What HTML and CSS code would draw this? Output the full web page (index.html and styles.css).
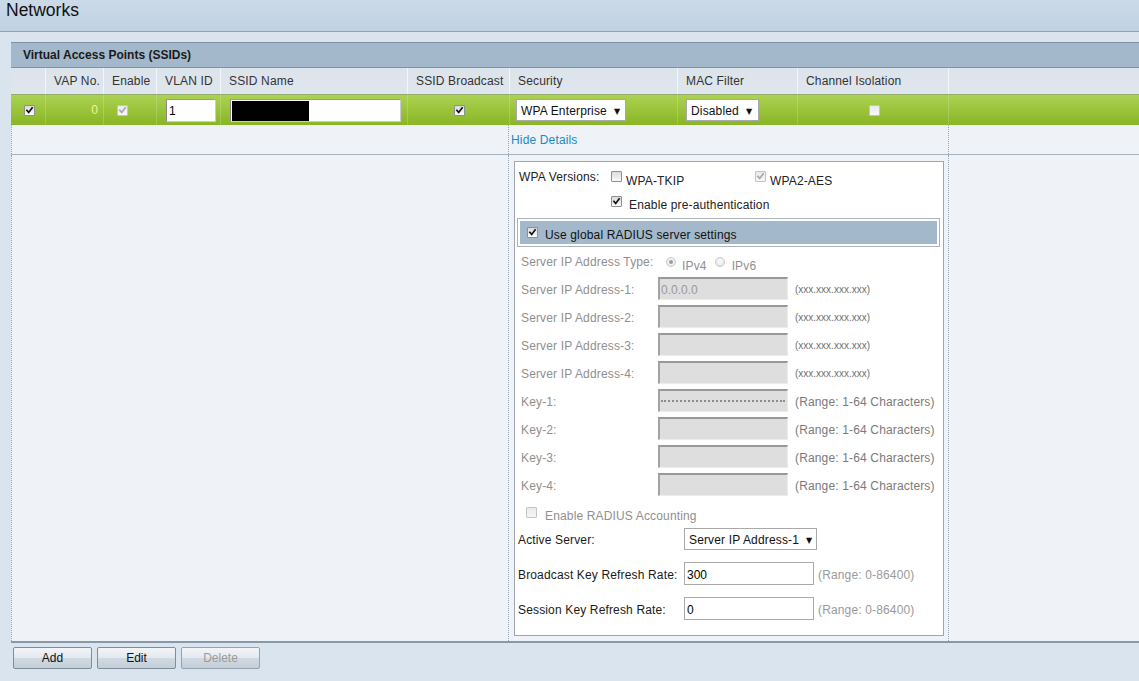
FILE: index.html
```html
<!DOCTYPE html>
<html>
<head>
<meta charset="utf-8">
<title>Networks</title>
<link rel="stylesheet" href="styles.css">
</head>
<body>
<div class="topbar"><h1 class="title">Networks</h1></div>
<div class="main">
  <div class="vap">
    <div class="cap">Virtual Access Points (SSIDs)</div>
    <div class="row hdr">
      <div class="c"></div>
      <div class="c">VAP No.</div>
      <div class="c">Enable</div>
      <div class="c">VLAN ID</div>
      <div class="c">SSID Name</div>
      <div class="c">SSID Broadcast</div>
      <div class="c">Security</div>
      <div class="c">MAC Filter</div>
      <div class="c">Channel Isolation</div>
      <div class="c"></div>
    </div>
    <div class="row sel">
      <div class="c p14"><span class="cb on"><svg viewBox="0 0 11 11"><path d="M2.3 5.4l2.2 2.4 4.2-5.6"/></svg></span></div>
      <div class="c num">0</div>
      <div class="c p14"><span class="cb on dis"><svg viewBox="0 0 11 11"><path d="M2.3 5.4l2.2 2.4 4.2-5.6"/></svg></span></div>
      <div class="c p10"><input class="wtxt vlan" value="1"></div>
      <div class="c p10"><div class="wtxt ssid"><span class="mask"></span></div></div>
      <div class="c p47"><span class="cb on"><svg viewBox="0 0 11 11"><path d="M2.3 5.4l2.2 2.4 4.2-5.6"/></svg></span></div>
      <div class="c p7"><div class="dd dd-sec"><span>WPA Enterprise</span><span class="arr">▼</span></div></div>
      <div class="c p9"><div class="dd dd-mac"><span>Disabled</span><span class="arr">▼</span></div></div>
      <div class="c p72"><span class="cb dis"></span></div>
      <div class="c"></div>
    </div>
    <div class="row2 link">
      <div class="d1"></div>
      <div class="d2"><a class="hide">Hide Details</a></div>
      <div class="d3"></div>
    </div>
    <div class="row2 det">
      <div class="d1"></div>
      <div class="d2">
        <div class="box">
          <div class="wpa">
            <span class="lab-wpa">WPA Versions:</span>
            <div class="grp">
              <span class="cb"></span><span class="cbt">WPA-TKIP</span>
            </div>
            <div class="grp">
              <span class="cb on dis"><svg viewBox="0 0 11 11"><path d="M2.3 5.4l2.2 2.4 4.2-5.6"/></svg></span><span class="cbt">WPA2-AES</span>
            </div>
          </div>
          <div class="pre">
            <span class="cb on"><svg viewBox="0 0 11 11"><path d="M2.3 5.4l2.2 2.4 4.2-5.6"/></svg></span><span class="pre-t">Enable pre-authentication</span>
          </div>
          <div class="radius">
            <div class="radius-in">
              <span class="cb on"><svg viewBox="0 0 11 11"><path d="M2.3 5.4l2.2 2.4 4.2-5.6"/></svg></span><span class="radius-t">Use global RADIUS server settings</span>
            </div>
          </div>
          <div class="iptype">
            <span class="lab-type">Server IP Address Type:</span>
            <span class="rd on"></span><span class="rdt">IPv4</span>
            <span class="rd rd2"></span><span class="rdt">IPv6</span>
          </div>
          <div class="field"><span class="flab">Server IP Address-1:</span><input class="gfld" value="0.0.0.0" disabled><span class="ihint">(xxx.xxx.xxx.xxx)</span></div>
          <div class="field"><span class="flab">Server IP Address-2:</span><input class="gfld" value="" disabled><span class="ihint">(xxx.xxx.xxx.xxx)</span></div>
          <div class="field"><span class="flab">Server IP Address-3:</span><input class="gfld" value="" disabled><span class="ihint">(xxx.xxx.xxx.xxx)</span></div>
          <div class="field"><span class="flab">Server IP Address-4:</span><input class="gfld" value="" disabled><span class="ihint">(xxx.xxx.xxx.xxx)</span></div>
          <div class="field"><span class="flab">Key-1:</span><div class="gfld gkey"><span class="dots"></span></div><span class="rhint">(Range: 1-64 Characters)</span></div>
          <div class="field"><span class="flab">Key-2:</span><input class="gfld" value="" disabled><span class="rhint">(Range: 1-64 Characters)</span></div>
          <div class="field"><span class="flab">Key-3:</span><input class="gfld" value="" disabled><span class="rhint">(Range: 1-64 Characters)</span></div>
          <div class="field"><span class="flab">Key-4:</span><input class="gfld" value="" disabled><span class="rhint">(Range: 1-64 Characters)</span></div>
          <div class="acct">
            <span class="cb dis"></span><span class="acct-t">Enable RADIUS Accounting</span>
          </div>
          <div class="frow active">
            <span class="blab">Active Server:</span>
            <div class="dd dd-act"><span>Server IP Address-1</span><span class="arr">▼</span></div>
          </div>
          <div class="frow gap12">
            <span class="blab">Broadcast Key Refresh Rate:</span>
            <input class="wfld" value="300"><span class="bhint">(Range: 0-86400)</span>
          </div>
          <div class="frow gap12">
            <span class="blab">Session Key Refresh Rate:</span>
            <input class="wfld" value="0"><span class="bhint">(Range: 0-86400)</span>
          </div>
        </div>
      </div>
      <div class="d3"></div>
    </div>
  </div>
  <div class="btns">
    <button class="btn">Add</button>
    <button class="btn">Edit</button>
    <button class="btn off">Delete</button>
  </div>
</div>
</body>
</html>
```

FILE: styles.css
```css
* { box-sizing: border-box; }
html, body { margin: 0; padding: 0; }
body {
  font-family: "Liberation Sans", Arial, sans-serif;
  font-size: 12px;
  line-height: 14px;
  letter-spacing: 0.15px;
  color: #222;
  background: #d9e4ef;
  width: 1139px;
  height: 681px;
  overflow: hidden;
}
.topbar {
  height: 32px;
  background: linear-gradient(#cbdae9, #c0d2e3);
  border-bottom: 1px solid #8fa3b6;
}
.title {
  margin: 0;
  padding: 0 0 0 6px;
  font-size: 17.5px;
  line-height: 20px;
  font-weight: normal;
  letter-spacing: 0;
  color: #111;
}
.main { padding: 10px 0 0 11px; }
.vap {
  width: 1128px;
  border-top: 1px solid #7d92a5;
  border-bottom: 2px solid #8798a8;
}
.cap {
  height: 25px;
  background: #a3b8ca;
  border-bottom: 1px solid #7d92a5;
  padding: 5px 0 0 12px;
  font-weight: bold;
  letter-spacing: 0;
  color: #1a1a1a;
}
.row {
  display: grid;
  grid-template-columns: 34px 58px 53px 64px 187px 102px 168px 120px 151px 1fr;
}
.c {
  display: flex;
  align-items: center;
  white-space: nowrap;
  overflow: hidden;
}
.hdr { height: 26px; background: linear-gradient(#dbe3eb, #e0e6ee); }
.hdr .c { padding-left: 8px; color: #333; }
.hdr .c + .c { border-left: 1px solid #f3f6f9; }
.sel {
  height: 31px;
  border-top: 1px solid #95ad6a;
  background: linear-gradient(#abd253, #8ab524);
}
.sel .c + .c { border-left: 1px solid rgba(255,255,255,0.18); }
.p14 { padding-left: 13px; }
.p10 { padding-left: 9px; }
.p47 { padding-left: 46px; }
.p7 { padding-left: 6px; }
.p9 { padding-left: 8px; }
.p72 { padding-left: 71px; }
.num { justify-content: flex-end; padding-right: 5px; color: #f3f19a; }

.cb {
  display: inline-block;
  flex: none;
  width: 11px;
  height: 11px;
  border: 1px solid #8d8f91;
  border-radius: 1px;
  background: linear-gradient(#d9dadb, #fbfbfb);
}
.cb svg { display: block; width: 9px; height: 9px; }
.cb svg path { fill: none; stroke: #111; stroke-width: 2; stroke-linecap: square; }
.cb.dis { border-color: #c2c4c6; background: linear-gradient(#e9eaeb, #f7f7f7); }
.cb.dis svg path { stroke: #a5a7a9; }

.wtxt {
  display: block;
  height: 23px;
  border: 1px solid #ccc;
  border-top-color: #9a9a9a;
  border-left-color: #8a8a8a;
  background: #fff;
  font: 12px "Liberation Sans", Arial, sans-serif;
  color: #000;
  padding: 2px 2px 0;
  margin: 0;
}
.vlan { width: 50px; }
.ssid { width: 171px; padding: 1px; }
.mask { display: block; width: 77px; height: 20px; background: #000; }

.dd {
  display: inline-flex;
  align-items: baseline;
  height: 22px;
  background: #fff;
  border: 1px solid #a9a9a9;
  padding: 4px 0 0 4px;
  color: #111;
  white-space: nowrap;
}
.arr { font-family: "DejaVu Sans", sans-serif; font-size: 8px; margin-left: 7px; position: relative; top: -1px; }
.dd-sec { width: 110px; }
.dd-mac { width: 73px; }
.dd-act { width: 133px; }

.row2 {
  display: grid;
  grid-template-columns: 497px 441px 1fr;
  background: #eff3f8;
}
.row2 .d1 { border-left: 1px dotted #9aa6b2; }
.row2 .d2 { border-left: 1px dotted #9aa6b2; border-right: 1px dotted #9aa6b2; }
.link { height: 30px; border-bottom: 1px solid #a8b3bf; }
.hide { display: block; padding: 8px 0 0 2px; color: #2389c0; cursor: pointer; }
.det { height: 486px; }

.box {
  margin: 6px 0 0 5px;
  width: 430px;
  height: 475px;
  border: 1px solid #9ea7b1;
  background: #fff;
}
.wpa { display: flex; height: 28px; }
.lab-wpa { width: 96px; padding: 8px 0 0 4px; }
.grp { display: flex; width: 144px; }
.grp .cb { margin-top: 9px; }
.cbt { margin: 12px 0 0 4px; }
.pre { display: flex; height: 26px; padding-left: 96px; }
.pre .cb { margin-top: 6px; }
.pre-t { margin: 8px 0 0 7px; }
.radius {
  margin: 2px 0 0 2px;
  width: 423px;
  height: 29px;
  border: 1px solid #a8b3be;
  padding: 2px;
}
.radius-in {
  display: flex;
  height: 23px;
  background: #a3b9cb;
  padding-left: 7px;
}
.radius-in .cb { margin-top: 6px; }
.radius-t { margin: 7px 0 0 7px; color: #111; }
.iptype { display: flex; height: 30px; padding-left: 6px; color: #8f8f8f; }
.lab-type { width: 145px; padding-top: 8px; }
.rd {
  flex: none;
  width: 10px;
  height: 10px;
  margin-top: 10px;
  border-radius: 50%;
  border: 1px solid #c6c8ca;
  background: radial-gradient(circle at 50% 40%, #fafafa, #e3e4e5);
  display: flex;
  align-items: center;
  justify-content: center;
}
.rd.on::after { content: ""; width: 4px; height: 4px; border-radius: 50%; background: #9c9ea0; }
.rd2 { margin-left: 8px; }
.rdt { margin: 12px 0 0 6px; }
.rd2 + .rdt { margin-left: 7px; }

.field {
  display: flex;
  align-items: center;
  height: 23px;
  margin-bottom: 5px;
  padding-left: 6px;
  color: #8f8f8f;
}
.flab { width: 137px; padding-top: 2px; }
.gfld {
  display: block;
  width: 130px;
  height: 23px;
  margin: 0;
  background: #dedede;
  border-style: solid;
  border-width: 2px 1px 1px 2px;
  border-color: #999 #ececec #ececec #a3a3a3;
  padding: 2px 1px 0;
  font: 12px "Liberation Sans", Arial, sans-serif;
  color: #9a9a9a;
}
.gkey { display: flex; align-items: center; padding: 0 2px 0 1px; }
.dots { display: block; width: 100%; height: 2px; border-top: 2px dotted #8c8c8c; }
.ihint { margin-left: 7px; font-size: 10px; letter-spacing: 0; color: #6f6f6f; padding-top: 2px; }
.rhint { margin-left: 7px; color: #7a7a7a; padding-top: 2px; }

.acct { display: flex; height: 25px; padding-left: 11px; color: #8f8f8f; }
.acct .cb { margin-top: 6px; }
.acct-t { margin: 8px 0 0 8px; }
.frow { display: flex; align-items: baseline; padding-left: 3px; color: #1a1a1a; }
.active { margin-top: 2px; }
.gap12 { margin-top: 12px; }
.blab { width: 166px; }
.wfld {
  width: 130px;
  height: 23px;
  margin: 0;
  border: 1px solid #aaa;
  background: #fff;
  padding: 3px 2px 0;
  font: 12px "Liberation Sans", Arial, sans-serif;
  color: #000;
}
.bhint { margin-left: 4px; color: #9a9a9a; }

.btns { display: flex; gap: 5px; padding: 4px 0 0 2px; }
.btn {
  width: 79px;
  height: 22px;
  margin: 0;
  padding: 0;
  border: 1px solid #7f8d9a;
  border-radius: 2px;
  background: linear-gradient(#f2f5f8 0%, #e3e9ef 48%, #d1dae2 52%, #c4ced8 100%);
  font: 12px "Liberation Sans", Arial, sans-serif;
  color: #111;
}
.btn.off { color: #9a9a9a; border-color: #96a3ae; }
```
